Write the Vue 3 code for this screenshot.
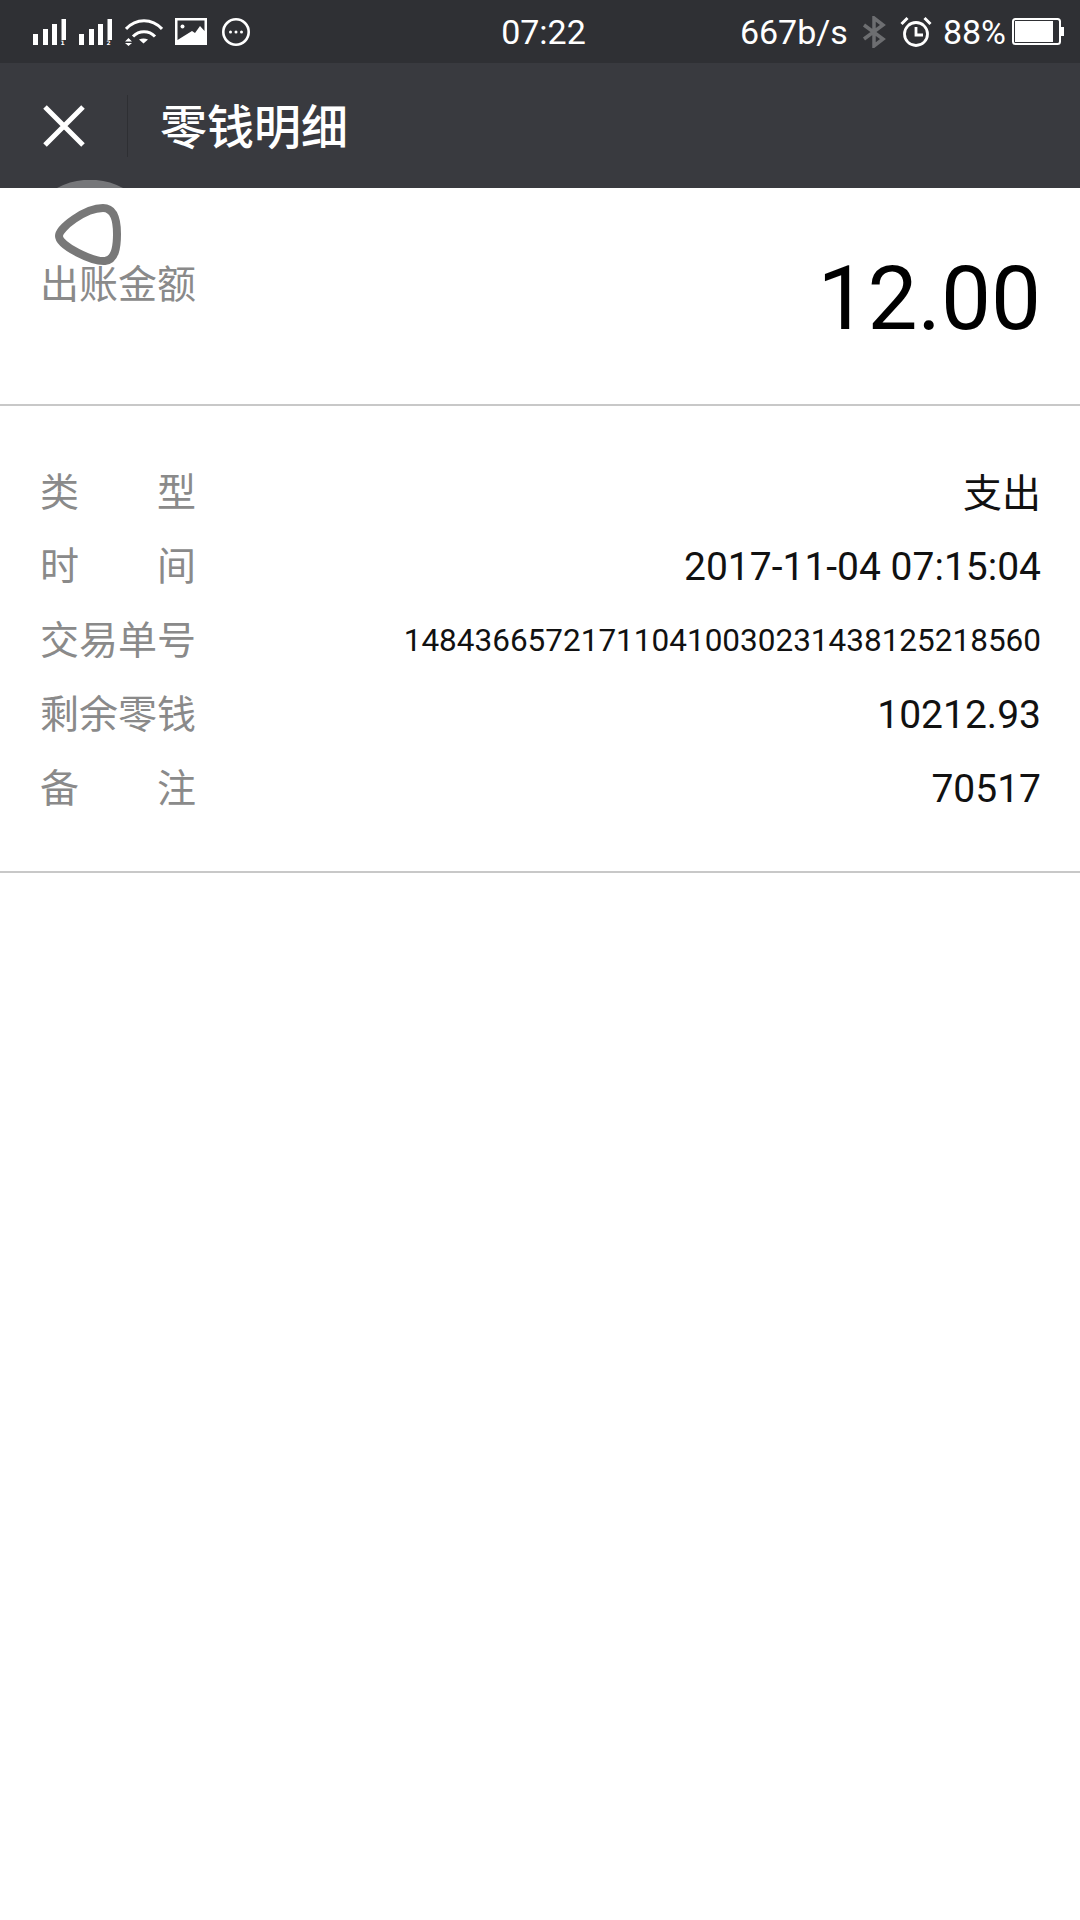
<script setup>
const rows = [
  { label: ['类', '型'], value: '支出', cls: 'cjk' },
  { label: ['时', '间'], value: '2017-11-04 07:15:04', cls: '' },
  { label: ['交易单号'], value: '148436657217110410030231438125218560', cls: 'small' },
  { label: ['剩余零钱'], value: '10212.93', cls: '' },
  { label: ['备', '注'], value: '70517', cls: '' }
]
</script>

<template>
  <div class="page">
    <header class="status">
      <div class="status-left">
        <svg class="ic" viewBox="0 0 34 26" width="34" height="26">
          <path fill="#fff" d="M0 15h5v11H0zM10 10h5v16h-5zM19 5h5v21h-5zM28.500 0h4.500v21h-4.500z" />
          <text x="27.500" y="26" class="sim">1</text>
        </svg>
        <svg class="ic" viewBox="0 0 34 26" width="34" height="26">
          <path fill="#fff" d="M0 15h5v11H0zM10 10h5v16h-5zM19 5h5v21h-5zM28.500 0h4.500v21h-4.500z" />
          <text x="27.500" y="26" class="sim">2</text>
        </svg>
        <svg class="ic" viewBox="0 0 38 28" width="38" height="28">
          <path d="M1 11C11 0 27 0 37 11M8 18.500C14 12 24 12 30 18.500" fill="none" stroke="#fff" stroke-width="3" />
          <path d="M14 21.500c3-1.500 6-1.500 9 0l-4.500 4z" fill="#fff" />
          <path d="M0 23.500h7L3.500 20zM0 25h7l-3.500 3z" fill="#fff" />
        </svg>
        <svg class="ic" viewBox="0 0 32 27" width="32" height="27">
          <path fill="#fff" fill-rule="evenodd" d="M0 0h32v27H0zM2.500 2.500V22L17 13l3 2 5-7 4.500 5V2.500z" />
          <circle cx="7.500" cy="8.500" r="2" fill="#fff" />
        </svg>
        <svg class="ic" viewBox="0 0 28 28" width="28" height="28">
          <circle cx="14" cy="14" r="12.700" fill="none" stroke="#fff" stroke-width="2.600" />
          <circle cx="8.500" cy="14" r="1.500" fill="#fff" />
          <circle cx="14" cy="14" r="1.500" fill="#fff" />
          <circle cx="19.500" cy="14" r="1.500" fill="#fff" />
        </svg>
      </div>
      <div class="clock">07:22</div>
      <div class="status-right">
        <span class="speed">667b/s</span>
        <svg class="ic bt" viewBox="0 0 24 32" width="24" height="32">
          <path d="M2 9l19 14-9 7V2l9 7L2 23" fill="none" stroke="#6d6e71" stroke-width="3.500" />
        </svg>
        <svg class="ic alarm" viewBox="0 0 32 32" width="32" height="32">
          <circle cx="16" cy="18" r="11.500" fill="none" stroke="#fff" stroke-width="2.800" />
          <path d="M16 11v8h7" fill="none" stroke="#fff" stroke-width="2.800" />
          <path d="M1.500 8l6-6M30.500 8l-6-6" fill="none" stroke="#fff" stroke-width="3" />
        </svg>
        <span class="pct">88%</span>
        <svg class="ic" viewBox="0 0 52 27" width="52" height="27">
          <rect x="1" y="1" width="47" height="25" rx="2.500" fill="none" stroke="#fff" stroke-width="2" />
          <rect x="3" y="3" width="38" height="21" fill="#fff" />
          <rect x="49" y="9" width="3" height="9" fill="#fff" />
        </svg>
      </div>
    </header>

    <nav class="nav">
      <button class="close" aria-label="关闭">
        <svg viewBox="0 0 44 44" width="44" height="44">
          <path d="M3 3l38 38M41 3L3 41" fill="none" stroke="#fff" stroke-width="5" />
        </svg>
      </button>
      <span class="sep"></span>
      <h1 class="title">零钱明细</h1>
    </nav>

    <section class="amount">
      <span class="label">出账金额</span>
      <span class="sum">12.00</span>
    </section>

    <section class="details">
      <div v-for="r in rows" :key="r.value" class="row">
        <span class="label" :class="{ spread: r.label.length > 1 }">
          <span v-for="c in r.label" :key="c">{{ c }}</span>
        </span>
        <span class="value" :class="r.cls">{{ r.value }}</span>
      </div>
    </section>

    <svg class="ghost-top" viewBox="0 0 66 8" width="66" height="8">
      <path d="M0 8A70 70 0 0 1 66 8z" fill="#76777a" />
    </svg>
    <svg class="ghost" viewBox="0 0 66 62" width="66" height="62">
      <path d="M4 32C4 24 30 4 48 4c12 0 14 14 14 26 0 14-2 26-12 27C38 58 4 42 4 32z" fill="none" stroke="#787878" stroke-width="8" />
    </svg>
  </div>
</template>

<style scoped>
.page {
  position: relative;
  width: 1080px;
  height: 1920px;
  background: #fff;
  overflow: hidden;
  font-family: Roboto, "Noto Sans CJK SC", sans-serif;
}
.status {
  height: 63px;
  background: #2f3034;
  display: flex;
  align-items: center;
  justify-content: space-between;
  padding: 0 16px 0 33px;
  color: #fff;
  position: relative;
}
.status-left, .status-right {
  display: flex;
  align-items: center;
}
.status-left { gap: 12px; }
.status-left .ic:nth-child(5) { margin-left: 3px; }
.sim {
  font-family: "DejaVu Sans", sans-serif;
  font-size: 6px;
  font-weight: 700;
  fill: #fff;
}
.clock {
  position: absolute;
  left: 0;
  right: 0;
  top: 12px;
  text-align: center;
  font-size: 34px;
  line-height: 40px;
  padding-left: 7px;
}
.ic { display: block; flex: none; }
.speed, .pct { font-size: 34px; line-height: 40px; }
.bt { margin: 0 14px 0 14px; }
.alarm { margin-right: 11px; }
.pct { margin-right: 6px; }
.nav {
  height: 125px;
  background: #393a3f;
  display: flex;
  align-items: center;
  color: #fff;
}
.close {
  border: 0;
  padding: 0;
  background: none;
  width: 127px;
  display: flex;
  justify-content: center;
  box-sizing: border-box;
}
.sep {
  width: 1px;
  height: 62px;
  background: #2e2f33;
}
.title {
  margin: -5px 0 0 32px;
  font-size: 47px;
  font-weight: 500;
  font-family: "Noto Sans CJK SC", sans-serif;
}
.amount {
  height: 218px;
  box-sizing: border-box;
  padding: 0 39px 0 40px;
  display: flex;
  justify-content: space-between;
  align-items: center;
  border-bottom: 2px solid #c8c8c8;
}
.amount .label { position: relative; top: -15px; }
.sum {
  font-size: 89px;
  color: #000;
  line-height: 100px;
  position: relative;
  top: 3px;
}
.label {
  font-family: "Noto Sans CJK SC", sans-serif;
  font-size: 39px;
  line-height: 56px;
  color: #8a8a8a;
  width: 156px;
  display: flex;
  flex: none;
}
.row .label { position: relative; top: -2px; }
.spread { justify-content: space-between; }
.details {
  padding: 48px 39px 47px 40px;
  border-bottom: 2px solid #c8c8c8;
}
.row {
  height: 74px;
  display: flex;
  justify-content: space-between;
  align-items: center;
}
.value {
  font-size: 39px;
  color: #111;
  position: relative;
  top: 2px;
}
.value.cjk { font-family: "Noto Sans CJK SC", sans-serif; top: -1px; }
.value.small { font-size: 31.500px; top: 1px; }
.ghost {
  position: absolute;
  left: 55px;
  top: 204px;
}
.ghost-top {
  position: absolute;
  left: 57px;
  top: 180px;
}
</style>

<style>
html, body { margin: 0; background: #fff; }
</style>
